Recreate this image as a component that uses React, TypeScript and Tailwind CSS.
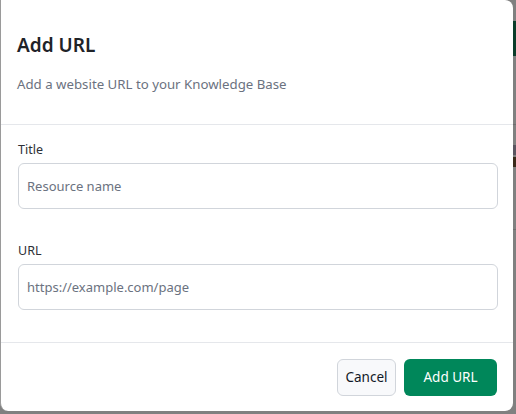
export default function App() {
  return (
    <div
      className="flex h-[414px] w-[516px] overflow-hidden bg-[#808080]"
      style={{ fontFamily: '"Noto Sans", "Open Sans", sans-serif' }}
    >
      <div className="flex h-[411px] w-[513px] shrink-0 flex-col rounded-b-lg rounded-tr-lg border-l border-[#9a9a9a] bg-white">
        <div className="border-b border-[#e5e7eb] pb-[30px] pl-[16px] pt-[31px]">
          <h2 className="text-[19px] font-semibold leading-7 text-[#1f2328]">Add URL</h2>
          <p className="mt-[15px] text-[13.25px] leading-5 text-[#6b7280]">
            Add a website URL to your Knowledge Base
          </p>
        </div>
        <div className="flex flex-col pb-[32px] pl-[17px] pr-[15px] pt-[15px]">
          <label className="text-[12.5px] leading-5 text-[#2d3036]">Title</label>
          <input
            className="mt-[3px] h-[46px] w-full rounded-md border border-[#d1d5db] px-2 text-[13px] text-[#374151] outline-none placeholder:text-[#6b7280]"
            placeholder="Resource name"
          />
          <label className="mt-[32px] text-[12.5px] leading-5 text-[#2d3036]">URL</label>
          <input
            className="mt-[3px] h-[46px] w-full rounded-md border border-[#d1d5db] px-2 text-[13px] text-[#374151] outline-none placeholder:text-[#6b7280]"
            placeholder="https://example.com/page"
          />
        </div>
        <div className="flex justify-end gap-2 border-t border-[#e5e7eb] pr-[16px] pt-[16px]">
          <button className="h-[37px] w-[59px] rounded-md border border-[#d1d5db] bg-[#f8f9fb] text-[13.5px] text-[#111827]">
            Cancel
          </button>
          <button className="h-[37px] w-[93px] rounded-md bg-[#00875a] text-[13.5px] text-white">
            Add URL
          </button>
        </div>
      </div>
      <div className="flex flex-1 flex-col">
        <div className="h-[21px]" />
        <div className="h-[35px] bg-[#0b3d2a]" />
        <div className="h-[68px]" />
        <div className="h-px bg-[#6e6e6e]" />
        <div className="mt-[20px] h-[10px] bg-[#5a5560]" />
        <div className="mt-[2px] h-[10px] bg-[#3a2a1a]" />
        <div className="mt-[62px] h-px bg-[#6e6e6e]" />
      </div>
    </div>
  );
}
